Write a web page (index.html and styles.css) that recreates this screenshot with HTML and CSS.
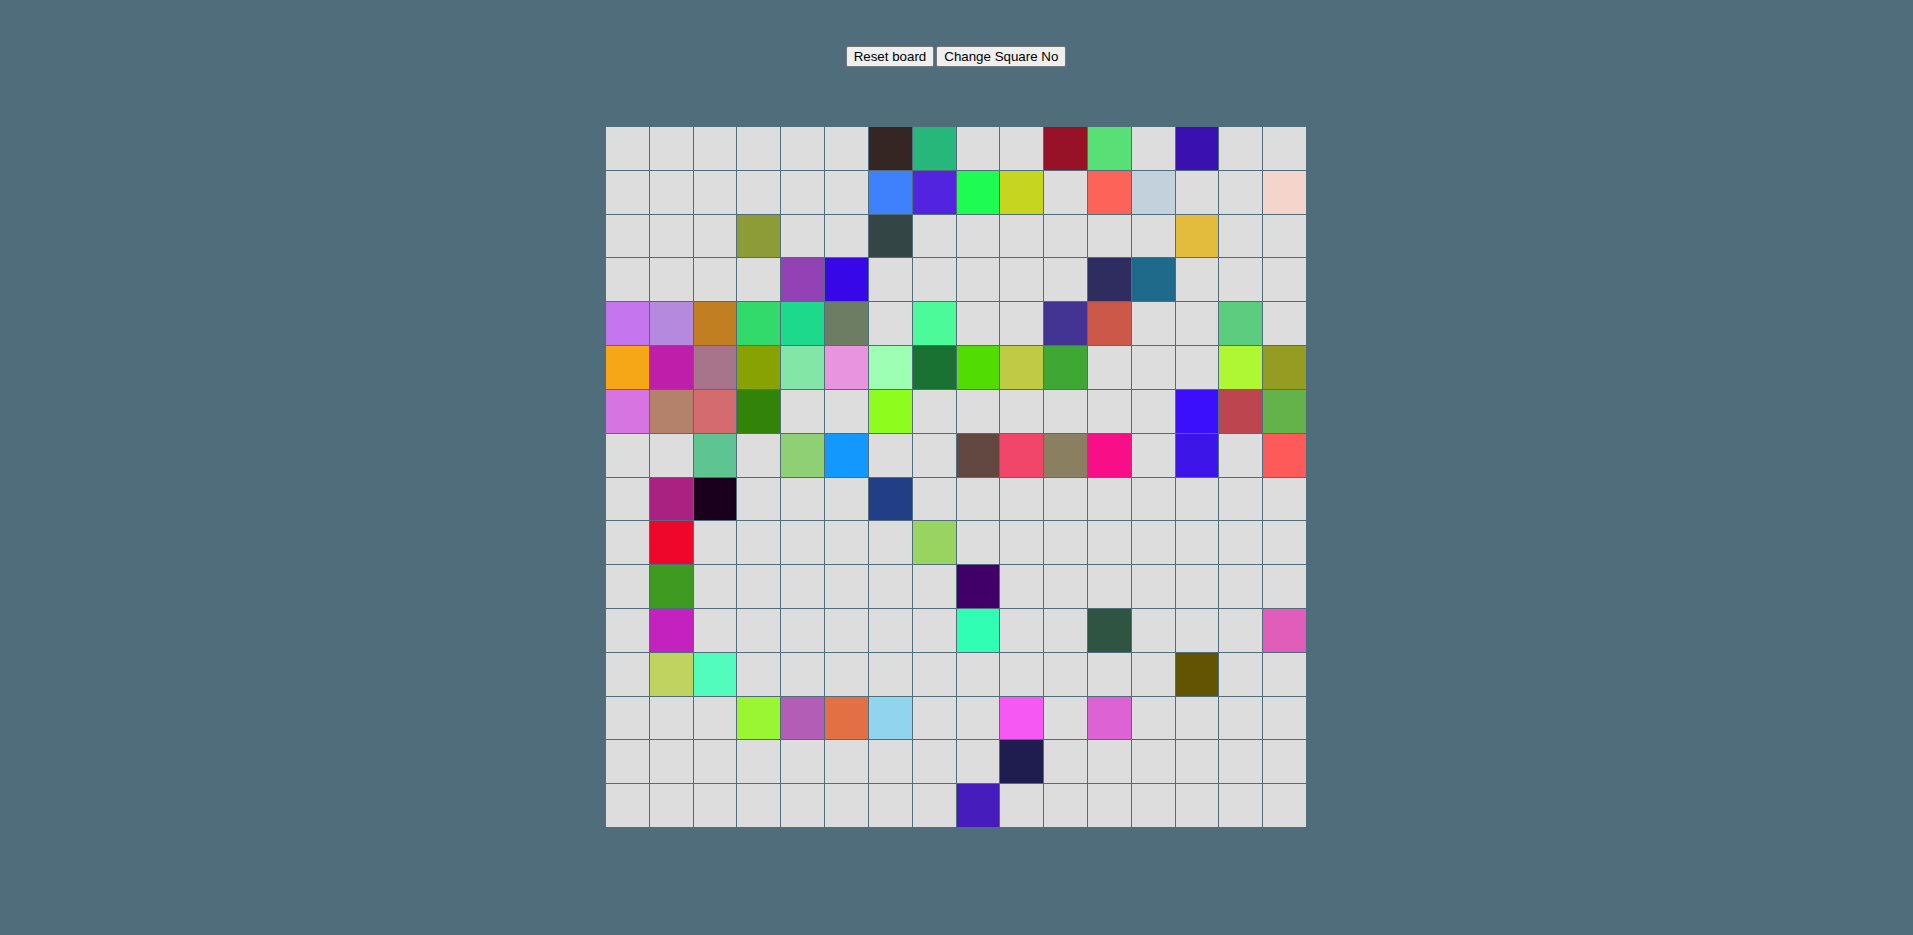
FILE: index.html
```html
<!DOCTYPE html>
<html lang="en">
<head>
<meta charset="utf-8">
<title>Board</title>
<link rel="stylesheet" href="styles.css">
</head>
<body>
<div class="controls">
  <button class="btn" type="button">Reset board</button>
  <button class="btn" type="button">Change Square No</button>
</div>
<div class="board">
<div class="cell"></div><div class="cell"></div><div class="cell"></div><div class="cell"></div><div class="cell"></div><div class="cell"></div><div class="cell" style="background:#352624"></div><div class="cell" style="background:#28b77b"></div><div class="cell"></div><div class="cell"></div><div class="cell" style="background:#971127"></div><div class="cell" style="background:#58df76"></div><div class="cell"></div><div class="cell" style="background:#3a10b0"></div><div class="cell"></div><div class="cell"></div>
<div class="cell"></div><div class="cell"></div><div class="cell"></div><div class="cell"></div><div class="cell"></div><div class="cell"></div><div class="cell" style="background:#3f80fc"></div><div class="cell" style="background:#5224e0"></div><div class="cell" style="background:#1efb52"></div><div class="cell" style="background:#c6d620"></div><div class="cell"></div><div class="cell" style="background:#fc6459"></div><div class="cell" style="background:#c3d1dc"></div><div class="cell"></div><div class="cell"></div><div class="cell" style="background:#f4d4cb"></div>
<div class="cell"></div><div class="cell"></div><div class="cell"></div><div class="cell" style="background:#8d9c36"></div><div class="cell"></div><div class="cell"></div><div class="cell" style="background:#334645"></div><div class="cell"></div><div class="cell"></div><div class="cell"></div><div class="cell"></div><div class="cell"></div><div class="cell"></div><div class="cell" style="background:#e4bc3d"></div><div class="cell"></div><div class="cell"></div>
<div class="cell"></div><div class="cell"></div><div class="cell"></div><div class="cell"></div><div class="cell" style="background:#9342b6"></div><div class="cell" style="background:#3707e8"></div><div class="cell"></div><div class="cell"></div><div class="cell"></div><div class="cell"></div><div class="cell"></div><div class="cell" style="background:#2f2c5f"></div><div class="cell" style="background:#1f6a8a"></div><div class="cell"></div><div class="cell"></div><div class="cell"></div>
<div class="cell" style="background:#c575ee"></div><div class="cell" style="background:#b58ade"></div><div class="cell" style="background:#c17f22"></div><div class="cell" style="background:#32da6c"></div><div class="cell" style="background:#1dd98c"></div><div class="cell" style="background:#6d7d63"></div><div class="cell"></div><div class="cell" style="background:#4cfa99"></div><div class="cell"></div><div class="cell"></div><div class="cell" style="background:#433392"></div><div class="cell" style="background:#cb5849"></div><div class="cell"></div><div class="cell"></div><div class="cell" style="background:#5ccd7f"></div><div class="cell"></div>
<div class="cell" style="background:#f5a716"></div><div class="cell" style="background:#bd1fab"></div><div class="cell" style="background:#a7748b"></div><div class="cell" style="background:#88a103"></div><div class="cell" style="background:#83e6a6"></div><div class="cell" style="background:#e994df"></div><div class="cell" style="background:#9cffb4"></div><div class="cell" style="background:#1a7232"></div><div class="cell" style="background:#51dc02"></div><div class="cell" style="background:#bfcb44"></div><div class="cell" style="background:#3fa834"></div><div class="cell"></div><div class="cell"></div><div class="cell"></div><div class="cell" style="background:#aef732"></div><div class="cell" style="background:#949d22"></div>
<div class="cell" style="background:#d675e2"></div><div class="cell" style="background:#b4826b"></div><div class="cell" style="background:#d46c6f"></div><div class="cell" style="background:#318407"></div><div class="cell"></div><div class="cell"></div><div class="cell" style="background:#8efd1e"></div><div class="cell"></div><div class="cell"></div><div class="cell"></div><div class="cell"></div><div class="cell"></div><div class="cell"></div><div class="cell" style="background:#3b0ffb"></div><div class="cell" style="background:#bd4550"></div><div class="cell" style="background:#64b24a"></div>
<div class="cell"></div><div class="cell"></div><div class="cell" style="background:#5ec491"></div><div class="cell"></div><div class="cell" style="background:#8ed073"></div><div class="cell" style="background:#1398fe"></div><div class="cell"></div><div class="cell"></div><div class="cell" style="background:#634842"></div><div class="cell" style="background:#f1456a"></div><div class="cell" style="background:#8b7f62"></div><div class="cell" style="background:#f80f87"></div><div class="cell"></div><div class="cell" style="background:#3e15e8"></div><div class="cell"></div><div class="cell" style="background:#fe5a5a"></div>
<div class="cell"></div><div class="cell" style="background:#a92282"></div><div class="cell" style="background:#1b001e"></div><div class="cell"></div><div class="cell"></div><div class="cell"></div><div class="cell" style="background:#223e84"></div><div class="cell"></div><div class="cell"></div><div class="cell"></div><div class="cell"></div><div class="cell"></div><div class="cell"></div><div class="cell"></div><div class="cell"></div><div class="cell"></div>
<div class="cell"></div><div class="cell" style="background:#ee072a"></div><div class="cell"></div><div class="cell"></div><div class="cell"></div><div class="cell"></div><div class="cell"></div><div class="cell" style="background:#9ad460"></div><div class="cell"></div><div class="cell"></div><div class="cell"></div><div class="cell"></div><div class="cell"></div><div class="cell"></div><div class="cell"></div><div class="cell"></div>
<div class="cell"></div><div class="cell" style="background:#3e9a20"></div><div class="cell"></div><div class="cell"></div><div class="cell"></div><div class="cell"></div><div class="cell"></div><div class="cell"></div><div class="cell" style="background:#410068"></div><div class="cell"></div><div class="cell"></div><div class="cell"></div><div class="cell"></div><div class="cell"></div><div class="cell"></div><div class="cell"></div>
<div class="cell"></div><div class="cell" style="background:#c322bf"></div><div class="cell"></div><div class="cell"></div><div class="cell"></div><div class="cell"></div><div class="cell"></div><div class="cell"></div><div class="cell" style="background:#30feb2"></div><div class="cell"></div><div class="cell"></div><div class="cell" style="background:#2f5442"></div><div class="cell"></div><div class="cell"></div><div class="cell"></div><div class="cell" style="background:#e05eb9"></div>
<div class="cell"></div><div class="cell" style="background:#c0d260"></div><div class="cell" style="background:#52fcbd"></div><div class="cell"></div><div class="cell"></div><div class="cell"></div><div class="cell"></div><div class="cell"></div><div class="cell"></div><div class="cell"></div><div class="cell"></div><div class="cell"></div><div class="cell"></div><div class="cell" style="background:#615504"></div><div class="cell"></div><div class="cell"></div>
<div class="cell"></div><div class="cell"></div><div class="cell"></div><div class="cell" style="background:#9af632"></div><div class="cell" style="background:#b45db6"></div><div class="cell" style="background:#e27044"></div><div class="cell" style="background:#90d5ed"></div><div class="cell"></div><div class="cell"></div><div class="cell" style="background:#f658f3"></div><div class="cell"></div><div class="cell" style="background:#dd62d3"></div><div class="cell"></div><div class="cell"></div><div class="cell"></div><div class="cell"></div>
<div class="cell"></div><div class="cell"></div><div class="cell"></div><div class="cell"></div><div class="cell"></div><div class="cell"></div><div class="cell"></div><div class="cell"></div><div class="cell"></div><div class="cell" style="background:#1f1c4f"></div><div class="cell"></div><div class="cell"></div><div class="cell"></div><div class="cell"></div><div class="cell"></div><div class="cell"></div>
<div class="cell"></div><div class="cell"></div><div class="cell"></div><div class="cell"></div><div class="cell"></div><div class="cell"></div><div class="cell"></div><div class="cell"></div><div class="cell" style="background:#471cbc"></div><div class="cell"></div><div class="cell"></div><div class="cell"></div><div class="cell"></div><div class="cell"></div><div class="cell"></div><div class="cell"></div>
</div>
</body>
</html>
```

FILE: styles.css
```css
html, body {
  margin: 0;
  padding: 0;
}

body {
  background: #4f6d7a;
  min-height: 100vh;
  padding-right: 1px;
  box-sizing: border-box;
  display: flex;
  flex-direction: column;
  align-items: center;
  font-family: "Liberation Sans", Arial, sans-serif;
}

.controls {
  display: flex;
  gap: 2px;
  margin-top: 46px;
}

.btn {
  font-family: "Liberation Sans", Arial, sans-serif;
  font-size: 13.333px;
  line-height: 15px;
  color: #000;
  background: #efefef;
  border: 1px solid #767676;
  border-radius: 2px;
  padding: 2px 7px;
  height: 21px;
  margin: 0;
  cursor: pointer;
}

.board {
  margin-top: 60px;
  width: 700px;
  height: 700px;
  display: grid;
  grid-template-columns: repeat(16, 1fr);
  grid-template-rows: repeat(16, 1fr);
  gap: 1px;
  background: #4f6d7a;
}

.cell {
  background: #dddddd;
}
```
